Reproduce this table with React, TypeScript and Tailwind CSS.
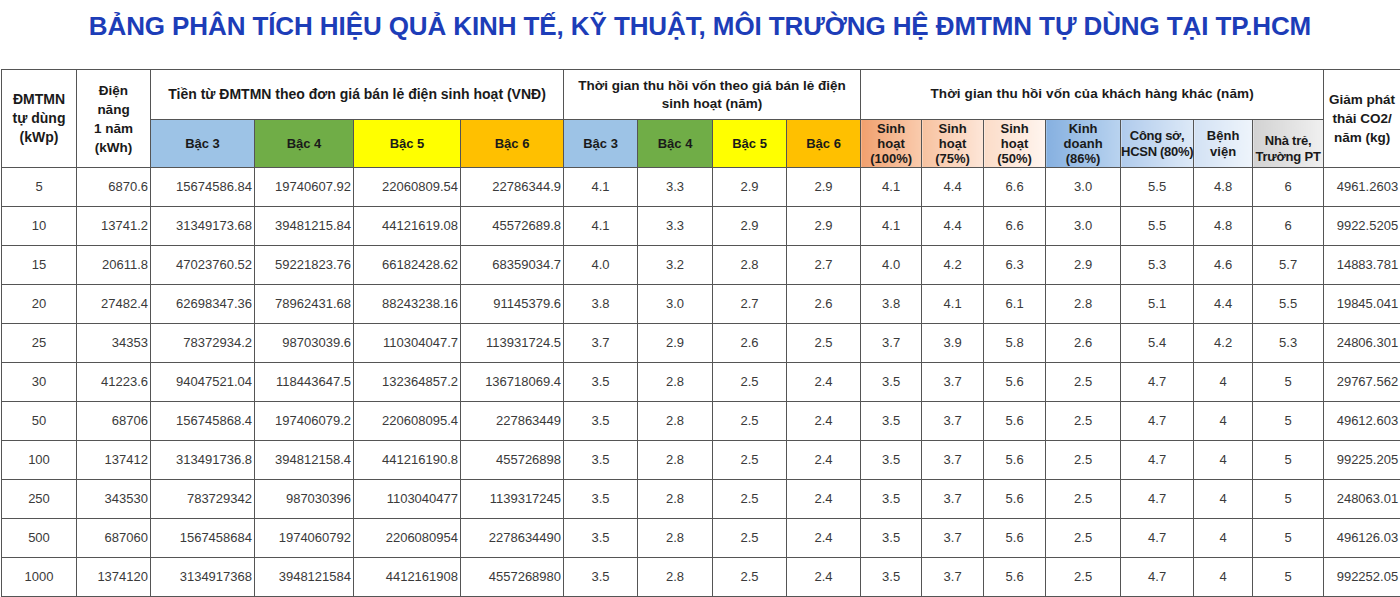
const rows: (string | number)[][] = [
    [5, "6870.6", "15674586.84", "19740607.92", "22060809.54", "22786344.9", "4.1", "3.3", "2.9", "2.9", "4.1", "4.4", "6.6", "3.0", "5.5", "4.8", "6", "4961.2603"],
    [10, "13741.2", "31349173.68", "39481215.84", "44121619.08", "45572689.8", "4.1", "3.3", "2.9", "2.9", "4.1", "4.4", "6.6", "3.0", "5.5", "4.8", "6", "9922.5205"],
    [15, "20611.8", "47023760.52", "59221823.76", "66182428.62", "68359034.7", "4.0", "3.2", "2.8", "2.7", "4.0", "4.2", "6.3", "2.9", "5.3", "4.6", "5.7", "14883.781"],
    [20, "27482.4", "62698347.36", "78962431.68", "88243238.16", "91145379.6", "3.8", "3.0", "2.7", "2.6", "3.8", "4.1", "6.1", "2.8", "5.1", "4.4", "5.5", "19845.041"],
    [25, "34353", "78372934.2", "98703039.6", "110304047.7", "113931724.5", "3.7", "2.9", "2.6", "2.5", "3.7", "3.9", "5.8", "2.6", "5.4", "4.2", "5.3", "24806.301"],
    [30, "41223.6", "94047521.04", "118443647.5", "132364857.2", "136718069.4", "3.5", "2.8", "2.5", "2.4", "3.5", "3.7", "5.6", "2.5", "4.7", "4", "5", "29767.562"],
    [50, "68706", "156745868.4", "197406079.2", "220608095.4", "227863449", "3.5", "2.8", "2.5", "2.4", "3.5", "3.7", "5.6", "2.5", "4.7", "4", "5", "49612.603"],
    [100, "137412", "313491736.8", "394812158.4", "441216190.8", "455726898", "3.5", "2.8", "2.5", "2.4", "3.5", "3.7", "5.6", "2.5", "4.7", "4", "5", "99225.205"],
    [250, "343530", "783729342", "987030396", "1103040477", "1139317245", "3.5", "2.8", "2.5", "2.4", "3.5", "3.7", "5.6", "2.5", "4.7", "4", "5", "248063.01"],
    [500, "687060", "1567458684", "1974060792", "2206080954", "2278634490", "3.5", "2.8", "2.5", "2.4", "3.5", "3.7", "5.6", "2.5", "4.7", "4", "5", "496126.03"],
    [1000, "1374120", "3134917368", "3948121584", "4412161908", "4557268980", "3.5", "2.8", "2.5", "2.4", "3.5", "3.7", "5.6", "2.5", "4.7", "4", "5", "992252.05"],
]

const widths = [75, 74, 104, 99, 107, 103, 74, 75, 74, 74, 61, 62, 62, 75, 73, 59, 71, 77]

// columns 1..5 and 17 are right-aligned numbers, the rest centred
const rightCols = [1, 2, 3, 4, 5, 17]

const th = "border border-[#555] font-bold text-[#1a1a1a] text-center align-middle p-0"

export default function App() {
    return (
        <div className="w-[1400px] h-[597px] overflow-hidden bg-white font-['Liberation_Sans',Arial,sans-serif]">
            <div className="h-[69px] pt-[10px] text-center text-[26px] leading-[32px] tracking-[-0.1px] font-bold text-[#1d3db8]">
                BẢNG PHÂN TÍCH HIỆU QUẢ KINH TẾ, KỸ THUẬT, MÔI TRƯỜNG HỆ ĐMTMN TỰ DÙNG TẠI TP.HCM
            </div>
            <table className="table-fixed border-collapse w-[1399px] ml-[1px]">
                <colgroup>
                    {widths.map((w, i) => (
                        <col key={i} style={{ width: w }} />
                    ))}
                </colgroup>
                <thead>
                    <tr className="h-[50px]">
                        <th rowSpan={2} className={`${th} leading-[19px] text-[14px]`}>
                            ĐMTMN<br />tự dùng<br />(kWp)
                        </th>
                        <th rowSpan={2} className={`${th} leading-[19px] text-[13.5px]`}>
                            Điện<br />năng<br />1 năm<br />(kWh)
                        </th>
                        <th colSpan={4} className={`${th} text-[14px]`}>
                            Tiền từ ĐMTMN theo đơn giá bán lẻ điện sinh hoạt (VNĐ)
                        </th>
                        <th colSpan={4} className={`${th} leading-[18px] text-[13.5px]`}>
                            Thời gian thu hồi vốn theo giá bán lẻ điện<br />sinh hoạt (năm)
                        </th>
                        <th colSpan={7} className={`${th} text-[13.5px] tracking-[0.1px]`}>
                            Thời gian thu hồi vốn của khách hàng khác (năm)
                        </th>
                        <th rowSpan={2} className={`${th} leading-[19px] text-[13.5px]`}>
                            Giảm phát<br />thải CO2/<br />năm (kg)
                        </th>
                    </tr>
                    <tr className="h-[48px] text-[13px]">
                        <th className={`${th} bg-[#9dc3e6]`}>Bậc 3</th>
                        <th className={`${th} bg-[#70ad47]`}>Bậc 4</th>
                        <th className={`${th} bg-[#ffff00]`}>Bậc 5</th>
                        <th className={`${th} bg-[#ffc000]`}>Bậc 6</th>
                        <th className={`${th} bg-[#9dc3e6]`}>Bậc 3</th>
                        <th className={`${th} bg-[#70ad47]`}>Bậc 4</th>
                        <th className={`${th} bg-[#ffff00]`}>Bậc 5</th>
                        <th className={`${th} bg-[#ffc000]`}>Bậc 6</th>
                        <th className={`${th} leading-[15px] bg-linear-to-r from-[#f0a06e] to-[#f9cbad]`}>
                            Sinh<br />hoạt<br />(100%)
                        </th>
                        <th className={`${th} leading-[15px] bg-linear-to-r from-[#f7c2a0] to-[#fde6d8]`}>
                            Sinh<br />hoạt<br />(75%)
                        </th>
                        <th className={`${th} leading-[15px] bg-linear-to-r from-[#fbdcc8] to-[#fff5ef]`}>
                            Sinh<br />hoạt<br />(50%)
                        </th>
                        <th className={`${th} leading-[15px] bg-linear-to-r from-[#86b0e0] to-[#b9d3ef]`}>
                            Kinh<br />doanh<br />(86%)
                        </th>
                        <th className={`${th} leading-[16px] whitespace-nowrap tracking-[-0.3px] bg-linear-to-r from-[#b0cbec] to-[#dde9f7]`}>
                            Công sở,<br />HCSN (80%)
                        </th>
                        <th className={`${th} leading-[16px] bg-linear-to-r from-[#d3e2f4] to-[#eef4fb]`}>
                            Bệnh<br />viện
                        </th>
                        <th className={`${th} leading-[16px] pt-[10px] whitespace-nowrap tracking-[-0.2px] bg-linear-to-r from-[#d2d2d2] to-[#f0f0f0]`}>
                            Nhà trẻ,<br />Trường PT
                        </th>
                    </tr>
                </thead>
                <tbody>
                    {rows.map((r, ri) => (
                        <tr key={ri} className="h-[39px]">
                            {r.map((v, ci) => (
                                <td
                                    key={ci}
                                    className={
                                        "border border-[#555] text-[13px] text-[#3a3a3a] align-middle p-0 " +
                                        (rightCols.includes(ci) ? "text-right pr-[2px]" : "text-center")
                                    }
                                >
                                    {v}
                                </td>
                            ))}
                        </tr>
                    ))}
                </tbody>
            </table>
        </div>
    )
}
